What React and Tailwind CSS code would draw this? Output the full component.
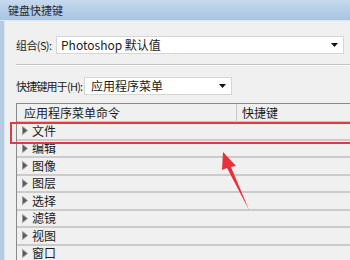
import React from 'react';

const FONT = { fontFamily: '"Noto Sans CJK SC", "Liberation Sans", sans-serif' };

const rows = ['文件', '编辑', '图像', '图层', '选择', '滤镜', '视图', '窗口'];

function Tri() {
  return (
    <svg width="6" height="9" viewBox="0 0 6 9" className="shrink-0">
      <path d="M0.5 0.5 L5.5 4.5 L0.5 8.5 Z" fill="#5a5a5a" stroke="#9a9a9a" strokeWidth="1" />
    </svg>
  );
}

function Caret() {
  return (
    <svg width="7" height="4" viewBox="0 0 7 4">
      <path d="M0 0 H7 L3.5 4 Z" fill="#111" />
    </svg>
  );
}

export default function App() {
  return (
    <div className="relative w-[350px] h-[260px] overflow-hidden bg-[#f0f0f0] text-[12px] leading-none text-[#1b1b1b]" style={FONT}>
      <div className="h-[21px] bg-gradient-to-b from-[#c6d9ee] to-[#a8c4e2] border-b border-[#dbe7f3] flex items-center pl-[8px] text-[11px] text-[#2a2a2a]">
        键盘快捷键
      </div>
      <div className="flex h-[239px]">
        <div className="w-[5px] bg-[#b5cbe3] border-r border-[#d8e4f0]" />
        <div className="flex-1 pl-[11px]">
          <div className="mt-[15px] flex items-center h-[18px]">
            <span className="w-[40px] shrink-0 whitespace-nowrap text-[11px] tracking-[-0.6px]">组合(S):</span>
            <div className="flex-1 h-[18px] bg-white border border-[#d6d6d6] flex items-center justify-between pl-[4px] pr-[5px] mr-[6px]">
              <span className="whitespace-nowrap">Photoshop 默认值</span>
              <Caret />
            </div>
          </div>
          <div className="mt-[10px] border-t border-[#c4c4c4] border-b border-b-white" />
          <div className="mt-[11px] flex items-center h-[18px]">
            <span className="w-[68px] shrink-0 whitespace-nowrap text-[11px] tracking-[-0.8px]">快捷键用于(H):</span>
            <div className="w-[148px] h-[18px] bg-white border border-[#d6d6d6] flex items-center justify-between pl-[6px] pr-[5px]">
              <span className="whitespace-nowrap">应用程序菜单</span>
              <Caret />
            </div>
          </div>
          <div className="mt-[8px] border-l border-t border-[#8a8a8a] bg-[#f0f0f0]">
            <div className="flex h-[19px] items-center border-b-2 border-[#c8c8c8]">
              <div className="w-[220px] pl-[7px] border-r border-[#c8c8c8] h-full flex items-center whitespace-nowrap">应用程序菜单命令</div>
              <div className="pl-[5px] whitespace-nowrap">快捷键</div>
            </div>
            {rows.map((r) => (
              <div key={r} className="flex items-center gap-[4px] h-[17.5px] pl-[5px] border-b-2 border-[#cbcbcb]">
                <Tri />
                <span>{r}</span>
              </div>
            ))}
          </div>
        </div>
      </div>
      <div className="absolute left-[10px] top-[122px] w-[350px] h-[22px] border-2 border-[#e23a3f]" />
      <svg className="absolute left-0 top-0" width="350" height="260" viewBox="0 0 350 260">
        <path d="M223 152 L236 166 L231 167 L249 210 L227 168 L222 170 Z" fill="#e8303a" />
      </svg>
    </div>
  );
}
